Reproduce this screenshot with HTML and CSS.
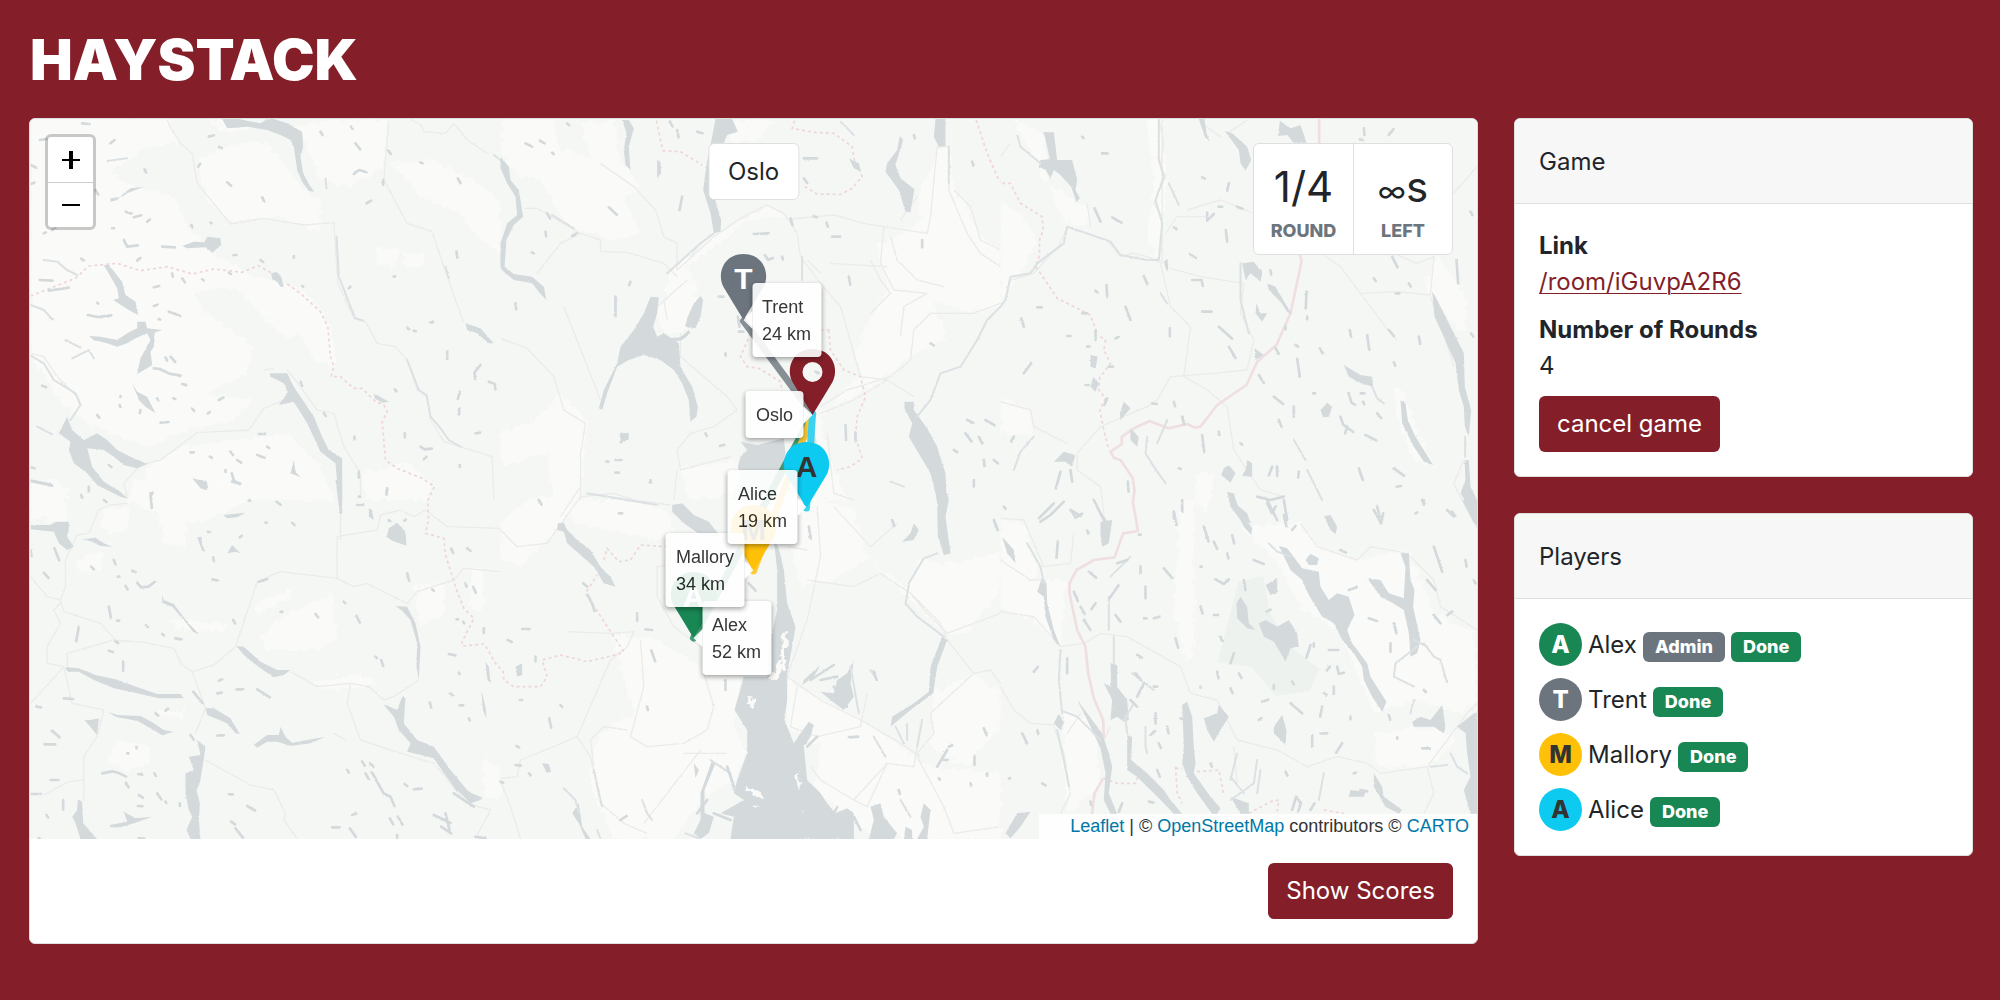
FILE: index.html
```html
<!DOCTYPE html>
<html lang="en">
<head>
<meta charset="utf-8">
<meta name="viewport" content="width=device-width, initial-scale=1">
<title>Haystack</title>
<link rel="stylesheet" href="styles.css">
</head>
<body>
<header class="site-header"><h1 class="brand">HAYSTACK</h1></header>
<main class="layout">
  <section class="card game-board">
    <div class="map">
      <div class="map-pane">
        <svg class="map-tiles" viewBox="30 119 1447 720" aria-hidden="true">
          <defs>
            <path id="pin" d="M0 0L-20-33C-27-46-20-66 0-66S27-46 20-33Z"/>
            <!-- rough natural edges for ground, shores and roads -->
            <filter id="rough-ground"><feTurbulence type="fractalNoise" baseFrequency=".05" numOctaves="3" seed="4"/><feDisplacementMap in="SourceGraphic" scale="30" xChannelSelector="R" yChannelSelector="G"/></filter>
            <filter id="rough-shore"><feTurbulence type="fractalNoise" baseFrequency=".15" numOctaves="2" seed="7"/><feDisplacementMap in="SourceGraphic" scale="6" xChannelSelector="R" yChannelSelector="G"/></filter>
          </defs>
          <!-- open ground -->
          <g class="open" transform="scale(.33333)">
            <path d="M90 357H500L540 430L420 450L330 520L400 560L520 590L560 680L640 760L760 830L860 850L940 900L990 980L1000 1100L960 1080L900 1000L860 1020L800 960L700 860L580 880L620 940L760 1040L740 1120L620 1180L760 1200L700 1260L560 1290L440 1340L300 1290L220 1240L160 1180L90 1060Z"/>
            <path d="M590 480L700 430L800 430L900 560L960 600L960 700L830 650L690 665L620 600Z"/>
            <path d="M620 360H700L760 380L680 400ZM880 380L1000 360H1160L1150 500L1040 560L960 540L920 440Z"/>
            <path d="M1170 490L1300 480L1420 540L1500 600V760L1440 720L1380 640L1260 590ZM900 1000L1000 1020L1010 1100L940 1080ZM1130 740L1200 750L1180 800L1130 790ZM1210 760H1270V800H1210Z"/>
            <path d="M540 1340L700 1320L860 1300L960 1400L1000 1500H400L440 1400ZM90 1460L200 1460L200 1500H90ZM1080 1420L1230 1390L1290 1450L1280 1500H1100Z"/>
          </g>
          <g class="open" transform="translate(0 480) scale(.33333)">
            <path d="M90 0H180L200 130L90 110ZM400 0H620L740 60L620 120L560 130L550 200L490 190L470 100L380 60ZM310 90L390 80L380 150L330 160L300 130Z"/>
            <path d="M780 470L860 400L1000 340V420L1010 480L940 510L800 510ZM770 370L880 325L860 360L760 410ZM1240 320L1330 310V400L1260 440ZM480 420H560L680 430L670 455L560 450ZM230 240L310 210L300 270L240 280ZM350 780L440 790L450 850L380 870L320 840Z"/>
            <path d="M1410 265H1450V390H1410ZM930 610L1080 580L1130 610L1080 625L960 625ZM1450 830L1500 870V950H1450ZM470 690L560 690L540 720L480 710Z"/>
          </g>
          <g class="open" transform="translate(500 100) scale(.33333)">
            <path d="M0 57H160L180 150L300 180L350 260L420 400L340 420L200 380L120 240L60 230L0 160ZM240 70L340 60L360 180L420 260L370 300L280 200Z"/>
            <path d="M700 60L830 60L770 120L690 130ZM650 400L800 320L860 350L740 360L640 440L560 500L590 570L530 620L490 570L520 500Z"/>
            <path d="M460 640L520 560L600 600L560 690L490 700ZM1250 290L1320 140L1350 150L1360 260L1450 420L1500 450V620L1420 640L1300 600L1340 720L1240 760L1140 840L1040 900L960 930L980 1060L1040 1200H940L930 980L1080 820L1060 760L1160 560L1130 440L1260 370Z"/>
            <path d="M180 880L260 960L240 1200H160L140 1060L0 1100V1000L100 960ZM540 1100L720 1080L720 1180L560 1200Z"/>
          </g>
          <g class="open" transform="translate(500 480) scale(.33333)">
            <path d="M200 60L380 60L500 90L520 160L460 180L320 150L220 130ZM900 40L1060 90L1100 240L1000 300L900 320L870 200ZM330 460L470 480L600 560L720 600L700 740L740 820L700 900L600 960L520 1077H340L260 900L300 760L400 700ZM860 600L1080 720L1200 800L1280 860L1500 880V1077L1130 1077L1000 980L940 920L960 800L860 740Z"/>
            <path d="M1100 240L1220 320L1260 240L1340 250L1500 220V330L1400 460L1340 460L1220 350ZM100 50L240 60L180 130L60 260L0 240V120ZM1300 640L1420 580L1500 640V740L1400 860L1290 800Z"/>
          </g>
          <g class="open" transform="translate(1000 100) scale(.33333)">
            <path d="M0 300L60 340L110 420L60 520L0 600ZM40 60L130 100L140 240L190 360L250 380L270 330L220 300L130 240ZM440 57H480L500 240L470 470L440 420L460 240ZM1180 860L1210 880L1260 1020L1300 1100L1240 1080L1190 960ZM1270 560L1310 460L1400 600L1390 700L1330 640ZM0 890L90 930L100 1010L0 1000ZM590 1120L640 1120L620 1240L580 1200Z"/>
          </g>
          <g class="open" transform="translate(1000 500) scale(.33333)">
            <path d="M0 60L80 80L110 240L200 240L180 440L100 360L0 330ZM720 80L900 70L950 140L1080 180L1220 150L1300 340L1420 400L1430 600L1380 640L1250 600L1120 640L1090 560L1020 400L900 320L840 200ZM190 640L280 660L300 860L200 940L190 800ZM1120 700L1300 680L1370 720L1280 800L1130 800ZM540 0H580V480H560L520 340Z"/>
          </g>
          <path class="park" d="M1228 620l10-38l25-6l6 36l20 34l30 23l-10 22l-34 5l-24-29l-34-5z"/>

          <!-- roads -->
          <g class="road" transform="scale(.33333)">
            <path d="M500 360L512 385L540 430L575 460L590 550L690 672L790 655L910 675L1000 668L1012 850L1060 955L1095 965L1130 1030L1185 1040L1220 1080L1250 1170L1280 1190L1290 1260L1330 1325L1475 1370L1480 1500M1165 360L1150 540L1220 670L1295 695L1340 830L1390 970M1230 358L1262 375L1270 395L1335 400L1360 370L1400 420L1460 460M850 1200L790 1225L745 1290L590 1298L480 1380L420 1395L370 1450L380 1490M790 1110L820 1105M860 1110L900 1160L950 1230L1000 1240L1030 1340L1080 1420V1490M90 1060L130 1070L170 1130L240 1200"/>
          </g>
          <g class="road" transform="translate(0 480) scale(.33333)">
            <path d="M380 70L330 75L295 90L265 160L230 165L195 240V320L180 360L190 395L300 430L350 485M90 290L140 350L180 360M180 370L160 390L180 430L140 500V550L190 560L90 670M190 560L215 670L310 690L290 770L250 830V960M200 560V520L340 480L430 487L520 505L545 555L575 575L640 555L705 500L770 305L840 275L1010 295L1010 170L1130 150L1140 105L1200 90L1240 110L1275 90L1340 140L1500 145M1020 100V180M575 575L615 685L585 760M615 840L750 915L820 930L855 1000L850 1020L890 1075M1010 295L1060 320L1100 310L1220 370L1250 335L1360 300L1390 265L1500 275M870 575L950 620L1050 610L1105 620L1150 660L1180 650L1255 600M1050 615L1040 670L1080 780L1170 810L1300 850L1400 970L1470 990L1430 1065M1000 760L1035 780M130 945L205 905L250 900"/>
          </g>
          <g class="road" transform="translate(500 100) scale(.33333)">
            <path d="M300 190L400 260L465 330L490 410L530 430V510L640 410L720 355L800 315L850 340L890 400L900 470L960 550L1020 620L1060 760L1080 830L1160 840L1240 890M70 325H110L240 400L300 420V455L380 457L490 490L530 530M110 520L180 430L240 400M870 357L1000 345L1090 370L1150 380L1140 490L1180 570L1280 580L1210 620L1200 710M1150 380L1280 400L1290 350L1310 140H1345V270L1400 400L1440 460L1500 500M1250 290L1200 360M1360 270L1410 320L1440 420L1500 450M1500 610L1420 640L1290 640L1240 690L1230 780L1170 830L1040 870L960 920M1160 840L1060 900L960 940M0 715L80 745L160 830L190 930L255 970L240 1060L240 1200M540 700V770L680 890L710 930L640 980L570 1000L530 1050L540 1110L690 1070M530 1110L520 1200M980 1000L1000 1180L1060 1200M490 600L500 660"/>
            <path d="M920 480L960 520M990 490L1160 500M1170 410L1190 480L1250 540L1330 560M1110 480L1140 540L1170 580L1110 640M570 470L600 430M300 900L190 620M560 540L470 620"/>
          </g>
          <g class="road" transform="translate(500 480) scale(.33333)">
            <path d="M0 150L50 200L140 190L240 50L340 40L400 60L510 75M240 20L180 110M640 190L600 240L470 260V350L520 440L600 500M200 455L330 460L400 455L380 500L330 540L230 770L160 800L60 840L50 890L0 895M230 770L270 830L300 970L370 1030L440 1060M420 480L430 620L390 770L440 800L550 790L620 750L640 680L610 580M550 820H680M600 810L500 940L430 1030M0 900L30 980L60 1077M860 590L960 660L1080 720L1200 790L1260 830M890 620L870 740L950 770L1080 740L1100 640M860 590L920 420L960 230L950 80M920 300L1060 320L1140 280L1230 340L1320 430L1340 480M1230 340L1280 400L1340 460L1500 400M1340 480L1420 580L1470 570L1500 610M1260 740L1240 860L1160 850L1060 960L1100 980L1160 850M1420 580L1290 700L1300 760L1250 820M1060 960L960 900L930 860M1250 830L1330 980L1360 1060L1500 1040M860 200L920 210M1000 80L1110 200L1190 130M280 860L270 780L310 740L380 750"/>
          </g>
          <g class="road" transform="translate(1000 100) scale(.33333)">
            <path d="M475 57L490 130L480 200L495 230L460 310L485 350V490L440 470L400 460L360 470L320 420L200 380L180 430L100 520L30 540L10 610M485 57V360M480 490L510 620L570 680L550 830L620 870L680 920L700 1050L780 1170L850 1190M610 75L660 110M680 100L740 60M620 350L530 350L495 400M560 330L660 300L760 340M510 505L600 530L730 550L720 640L760 720L740 810L640 820L510 830L470 900L440 920L300 980L230 1060V1110L300 1160L310 1240M0 905L90 930L100 980L200 1030M970 465L1020 500L1080 580L1170 700L1190 720M1080 580L1190 575L1290 585L1300 470L1250 490L1180 460M1290 590L1330 700L1360 800M1360 280L1430 200M1390 1080L1360 1150L1400 1230M270 380L260 310M0 170L30 130"/>
          </g>
          <g class="road" transform="translate(1000 500) scale(.33333)">
            <path d="M0 55L70 60L130 200L210 190L220 100M0 335L100 350L180 440L250 430L300 400L380 410L540 500L570 580L650 600L710 720L830 750L920 800L1010 770L1100 790L1140 820L1280 800L1400 640L1430 610M900 70L950 140L1070 180L1110 140L1220 160L1300 240L1320 320L1430 390M0 560L40 630L90 670L160 675L190 650M160 680L190 760L210 880L180 940M1280 800L1300 880L1270 940M0 180L90 240L120 240M700 740L710 850M310 720L330 680M240 640L200 700"/>
          </g>
          <g class="frontier" transform="translate(1000 100) scale(.33333)">
            <path d="M956 57V130M898 461L903 485L870 640L828 735L770 785L738 855L650 915L600 980L583 983L560 972L503 985L447 963L400 985L364 1010V1032L330 1055L340 1073L360 1080L397 1135L402 1170L397 1208L407 1260L412 1293L368 1300L342 1372L280 1380L228 1410L207 1450V1480L230 1590L255 1640L263 1720L280 1795L308 1860L310 1915M308 2035L282 2080L274 2145"/>
          </g>

          <!-- county lines -->
          <g class="county" transform="scale(.33333)">
            <path d="M90 888L225 835L265 798L350 790L420 812L500 800L575 822L640 807L725 817L773 797L815 820M860 852L900 880L960 935L982 980L990 1070L1000 1100L992 1130L1020 1130L1060 1165L1085 1165L1125 1205L1150 1215L1160 1235L1145 1265L1155 1380L1190 1405L1265 1435L1302 1460L1282 1500L1284 1560L1275 1600L1330 1615L1335 1665L1370 1775L1390 1825L1420 1855L1385 1925V1938L1452 1932L1485 1990L1508 2015L1510 2040L1540 2060L1620 2060L1640 2030L1625 1980L1680 1965L1760 1985L1855 1962L1870 1955L1755 1780L1790 1725M1810 1680L1820 1645L1855 1685L1890 1680L1920 1635L2000 1640"/>
          </g>
          <g class="county" transform="translate(500 100) scale(.33333)">
            <path d="M468 62L482 130L488 152L540 155L605 195M882 62L875 85L940 97L1000 100L1055 140L1060 175L1085 230L1055 265L1020 283L950 282L905 255M1427 60L1460 160L1490 230L1500 245M750 700L720 770L740 800L775 805L840 845L845 875M985 690L990 750L1030 810L1080 830L1095 890L1070 950L1065 1010L1085 1075L1050 1100L1010 1110M960 690H990"/>
          </g>
          <g class="county" transform="translate(1000 100) scale(.33333)">
            <path d="M5 250H30L60 310L125 350L128 390L117 420V465L105 500L120 520L170 595L270 645L290 700M300 710L315 720L310 750L330 790L297 835L295 870L315 895L298 930L310 990L325 1050M310 2035L350 2050L405 2050L412 2030M525 2000L530 2080L545 2110M525 2005H545M590 2015L655 2010L670 2085M745 2140L810 2105L835 2100L830 2135M970 2130L1030 2140"/>
          </g>

          <!-- lakes, fjord and rivers -->
          <g class="water" transform="scale(.33333)">
            <path d="M665 357H715L780 370L800 357H820L860 370L905 395L908 440L900 470L908 520L930 560L942 575L925 573L905 545L890 510L880 440L870 420L840 405L800 390L740 380L680 385Z"/>
            <path d="M545 738L580 725L612 727L620 710L660 715L662 735L635 758L615 742L560 745ZM310 795L325 795L365 845L375 885L405 905L413 945L385 930L338 900L355 895L350 865ZM812 820L830 815L842 830L850 860L840 860L830 845L815 838Z"/>
            <path d="M265 1008L300 1010L350 1020L380 1000L410 985V965L435 965L440 985L485 990L462 998L460 1040L450 1055L455 1095L440 1105L410 1122L420 1075L450 1020L440 1000L405 1015L380 1030L350 1040L320 1030L280 1020Z"/>
            <path d="M808 1120L860 1120L880 1160L940 1250L965 1310L985 1350L1025 1375V1500L1015 1500L1005 1390L960 1355L920 1270L880 1205L835 1215L862 1175L850 1150L810 1130Z"/>
            <path d="M175 1300L200 1250L215 1290L250 1320L290 1300L320 1320L350 1350L390 1370L440 1392L410 1405L370 1395L340 1370L310 1350L260 1345L275 1400L310 1445L350 1470L385 1497L360 1490L290 1455L260 1420L220 1390L205 1350L210 1325Z"/>
            <path d="M395 1150L410 1175L440 1190L465 1240L435 1220L415 1200ZM1120 1180L1165 1205L1145 1208L1122 1195ZM1395 970L1440 985L1480 1030L1465 1030L1430 1000L1400 990ZM575 1435L620 1445V1470L600 1465ZM880 1380L885 1415L900 1432L870 1420ZM330 595L365 590L380 580L430 560L390 565L370 580L350 600L330 605Z"/>
          </g>
          <g class="river" transform="scale(.33333)">
            <path d="M90 1067L130 1090L160 1140L225 1180L240 1215L210 1260M1008 710L1015 830L1050 920L1065 955L1090 962M1335 800L1345 835M1480 465L1500 480M110 1280L155 1303M90 915L130 930L157 960M130 780L170 785L200 810L230 825M195 1020L240 1043M215 1075L265 1050L280 1075M320 483L380 475M975 535L978 565M1220 1080L1255 1170L1278 1185L1290 1250L1320 1285L1345 1320L1380 1340"/>
          </g>
          <g class="pond" transform="scale(.33333)">
            <path d="M245 370l22 2M118 420l20 -3M330 430l12 -10M432 508l5 10M593 500l6 -8M625 410l15 -4M656 441l8 3M960 395l6 10M1052 380l4 6M1065 430l14 18M1163 452l8 10M1260 487l6 3M1060 522l16 -12l20 6M1148 540v14M1372 535l8 14M1098 610l14 -8M680 547l12 10M785 592l6 12M90 495l18 8M90 552l12 -4M376 635l18 6M400 652l22 -6M440 665l8 -6M573 675l2 6M630 668l3 2M370 720l10 20l32 -4M485 740l38 2M700 765h8M780 780l8 6M410 782l10 -8M242 776l8 5M880 768v5M460 862l16 -4M545 835l8 12M515 820l2 10M605 838l4 3M685 818l6 4M1180 830l4 -1M1368 755l2 18M145 872l35 -5l25 -4M118 840l38 2M290 908l3 3M262 945l30 6l40 -5M460 918l12 -4M505 935l14 5l20 8M475 957l4 2M1220 982l6 6M1240 992l6 2M1290 967h8M495 1072l6 10M510 1070l14 16M460 1105l18 2l28 14l34 6M470 1195l3 5M518 1195l6 2M655 1200l14 -8M575 1225l6 8M622 1240l6 -4M480 1268l24 -2M360 1188v3M358 1215l2 6M418 1240l2 -10M290 1245l6 8M545 1152l12 4M125 1157l12 4M900 1145l5 12M970 1240l6 8M1183 1168l5 6M1213 1300v12M1260 1340l12 8l22 -2M1270 1378l8 -8M1062 1310v8M775 1302l18 0M800 1340l6 4M770 1365l22 8M690 1355l8 10M710 1380l12 8M675 1410v6M694 1420l6 22l18 10M628 1370l6 3M570 1357h10M1075 1415v18M1160 1465l-2 15M1340 1055v22M1440 1095l-18 22l2 20M1465 1145l18 8l2 15M1378 1175l-6 22M1376 1225v18M1425 1300l14 -2M1378 1395v6M325 1395l8 6M450 1490l6 -12M285 570l8 14M155 690l10 -5M130 700l6 -3M335 685h6M1045 865l5 -5M905 858l3 2M90 1402l12 3M90 1442l60 12"/>
          </g>
          <g class="water" transform="translate(0 480) scale(.33333)">
            <path d="M90 135L150 135L165 125L205 125V150L200 170L220 200L200 210L175 190L160 155L90 148ZM280 0L310 15L350 28L380 55L355 40L300 20ZM580 0H605L622 20L612 30ZM668 105L735 98L710 112L680 115ZM590 172L603 170L605 195L615 215L605 212ZM680 220L695 195L720 220L705 215ZM245 178L285 173L310 190L335 200L300 198L275 185Z"/>
            <path d="M485 345L490 360L520 372L560 425L595 462L580 458L550 420L515 380L485 368ZM708 498L730 500L780 545L830 570L870 570L850 585L820 592L795 575L760 550L730 525ZM195 562L235 565L285 585L345 598L420 625L470 642L540 642L550 655L475 655L410 640L340 625L280 600L235 575L200 575Z"/>
            <path d="M615 685L640 685L690 715L718 762L705 760L680 730L620 705ZM320 695L350 705L420 708L460 730L490 750L520 755L485 766L450 745L410 722L350 712ZM760 795L800 765L835 765L840 740L855 770L875 788L975 770L930 790L870 798L830 785L800 785L770 803ZM590 780L615 800L608 850L598 910L588 930L598 970L595 1020L600 1077H570L558 1050L575 1010L565 990L555 940V880L580 870L565 830L600 825ZM232 958L245 965L248 1030L290 1077H240L225 1030L215 1010L230 990ZM328 1035L380 1025L370 995L405 1015L455 1010L400 1030L360 1042L330 1042Z"/>
            <path d="M1165 145L1190 128L1215 155L1218 197L1175 182L1158 170ZM1185 378L1220 380L1245 430L1260 500L1255 600L1248 560L1250 490L1230 420L1205 392ZM1148 672L1190 690L1205 650L1215 655L1210 730L1250 780L1300 800L1350 870L1400 930L1440 960L1410 970L1360 920L1330 880L1300 835L1220 815L1230 790L1195 750L1180 710ZM252 720L270 720L295 715L290 765ZM1005 0H1025V100H1018ZM1105 85L1115 90L1120 120L1105 110ZM1455 545L1465 560L1470 610L1460 600ZM1443 630L1455 680L1458 715L1447 690Z"/>
          </g>
          <g class="pond" transform="translate(0 480) scale(.33333)">
            <path d="M90 3l65 14M450 40l4 44M242 45l3 8M265 20v14M310 60l8 6M745 62h4M828 65l12 9M875 128l8 8M795 128h4M622 155l5 2M718 172l6 -5M638 232l2 10M340 240l5 14M395 272l10 4M352 290h5M130 278l14 16M272 260l8 8M375 318l6 10M410 308l12 14l22 -2l18 -14M636 298l14 3M775 305l25 -8M90 210l3 18M162 205l14 36M325 380l6 32M350 422h6M235 440l-8 44M325 512l12 4M368 545v28M345 485l8 4M436 436l6 5M485 462l5 4M525 475l18 3M698 420l6 10M840 396h6M945 402l8 10M1068 408l10 20M1030 366l4 3M1295 328l5 4M1352 205l6 14M1400 205l10 8M1220 280l6 22M1395 310l3 10M1418 320l8 18M1368 418h5M1388 425l3 5M1450 445v14M1345 522l20 4M1375 578l2 4M1125 530l4 4M1142 540l6 18M650 640l14 -2M655 602l10 -4M708 628h20M770 628l38 24M578 635l28 34M190 655l28 2M108 680l14 2M155 752l22 20M132 793h32M408 800v5M380 820h4M305 880l30 -6l22 6l20 10M376 908l8 14M413 882l12 2M462 880l3 7M470 940l12 18M495 965l3 4M415 945l12 8M412 978h14M538 970v8M150 900h24M90 942h32M188 960v30M138 1005l5 8M685 943h12M740 978l24 14M692 1025l12 8M705 1045l22 28M1085 845l8 12M1108 850l12 10M1095 880l10 18M1115 878l32 58M1150 940l20 10l12 28M1168 1015l10 18M1192 1010l14 24M995 1042h22M1048 1045l18 26M1055 1005l12 -4M1212 912l8 6M1240 928l24 -2M1190 1065v10M1350 640l6 6M1288 668l4 14M1378 676h10M1405 715l3 6M1300 1005l50 24M1335 1000l12 50M1322 1040l30 20M1425 1070l30 5M1340 880l30 50M1390 935l50 20M1360 940l60 40M1070 75h18M1075 50h4M1160 28l-2 16M695 5l24 6M1165 120l4 3M1212 122l4 -3M1040 870l5 8M465 700l8 6M495 692l8 -6M650 766h20M570 765l10 14M115 1074l4 3M415 1074l16 2"/>
          </g>
          <g class="water" transform="translate(500 100) scale(.33333)">
            <path d="M0 170L25 200L30 240L55 270L68 350L40 375L18 420L12 500L40 522L95 530L130 560L138 600L118 580L95 550L40 540L10 515L0 505V430L20 370L50 345L45 290L20 250L0 205ZM365 60H385L400 85L385 140L390 210L375 195L370 150L378 100ZM645 57H695L712 95L680 105L665 140L640 230L635 270L662 360L660 395L640 400L630 340L608 270L620 180L635 110Z"/>
            <path d="M1305 57H1335V138L1315 140L1300 110ZM1198 108L1208 120L1185 195L1200 235L1242 268L1230 335L1215 335L1195 270L1155 215L1160 190L1190 150ZM450 590L475 592L470 640L458 680L470 710L490 700L535 730L540 800L575 860L592 920L588 950L570 965L565 900L545 850L520 810L480 780L430 765L385 780L350 800L320 880L305 930L295 925L310 870L350 790L360 740L400 690L430 640Z"/>
            <path d="M600 588L608 600L600 650L585 685L555 680L560 655L580 610ZM500 715L540 712L565 690L570 700L545 720L520 725ZM712 1100L720 1070L740 1050L720 1025L770 1035L850 1015L855 1060L845 1110L820 1200H690L720 1130ZM1212 905L1240 905V930L1280 985L1310 1040L1335 1120L1338 1200H1310L1290 1120L1225 1010L1235 970L1212 925ZM470 180L480 185L482 220L470 235ZM1045 175L1075 190L1082 215L1060 205ZM357 1000L385 998L385 1018L362 1030Z"/>
          </g>
          <g class="river" transform="translate(500 100) scale(.33333)">
            <path d="M1500 620L1460 660L1430 720L1380 800L1320 820L1290 900L1250 950M1020 65L1060 105M940 1000L955 1080M905 470V540M940 1020L915 1110M155 345L220 385M1345 140V250M640 400L600 430L500 520"/>
          </g>
          <g class="pond" transform="translate(500 100) scale(.33333)">
            <path d="M75 130l20 10M118 122l14 8M200 70l6 6M155 158l4 4M590 95l16 5M530 90l4 22M508 65l8 14M545 290l-8 40M325 322l24 22M140 340l8 14M215 408l14 -8M135 395l2 14M94 457l6 3M45 610l2 18M345 590v58M390 545l-4 10M910 175h40M910 235l10 14M1265 420v22M870 355l6 20M978 368l4 12M940 348l8 4M1045 530l4 24M793 465l10 15l14 -6M845 470l2 8M760 402l44 -2M995 410h24M655 590h14M712 650l5 30M715 695h14M375 1015l-14 12M615 1000l4 8M658 1038l14 -4M345 1080h18M345 1118h10M318 1085h6M1035 975l2 45M1065 1000v24M1395 1000l18 24M1400 960l18 8M1450 1080l2 18M1455 960l28 16M1435 1010l10 20M1480 1080l12 10M1415 185l4 12M1360 1050l10 6M675 760v8M450 1140v8M1290 730l10 6M1240 105l3 10M945 815l10 4"/>
          </g>
          <g class="water" transform="translate(500 480) scale(.33333)">
            <path d="M515 75L545 70L580 105L625 125L660 170L600 165L550 130L515 95ZM172 130L190 128L200 150L230 180L270 210L300 260L330 290L345 320L310 310L280 260L240 225L200 190L190 155L170 150ZM820 180L835 205L850 270L860 370L885 440L875 500L860 580L860 660L852 720L880 790L900 760L925 725L940 735L930 770L910 800L920 900L960 940L980 970L1005 1000L1040 985L1060 1000V1077H690L700 1010L660 1000L730 960L700 940L710 900L740 820V750L702 690L730 590L800 590L805 500L830 390L830 270Z"/>
            <path d="M1300 0H1335L1335 30L1345 60L1335 110L1350 220L1330 225L1312 170L1310 70ZM530 388H560L570 420L585 470L550 420ZM1325 470L1340 480L1310 560L1298 640L1230 690L1170 740L1175 710L1240 670L1285 635L1290 560ZM635 840L645 850L612 930V1000L640 1010L625 1060L600 1077L580 1060L600 1020V940ZM580 850L595 870L585 895ZM910 600L960 555L940 590L905 615ZM960 635L1000 640L1010 600L1040 580L1060 540L1050 610L1060 650L1030 690L990 660ZM1110 980L1140 970L1150 1010L1190 1060L1180 1077H1105L1120 1020ZM1270 970L1290 990L1280 1077H1250L1270 1040L1260 1010ZM1215 1040L1235 1050V1077H1210ZM215 1000L235 970L245 1040L270 1077H255L235 1030ZM125 850L145 852L152 875L138 878ZM45 560L65 550L65 585L50 590ZM1240 130L1255 150L1240 180L1205 185L1230 160Z"/>
          </g>
          <g class="river" transform="translate(500 480) scale(.33333)">
            <path d="M260 40L380 60L470 75M190 925L225 960L235 1000M630 840L690 880L700 930M1050 560L1075 700M1110 570L1130 600M1120 770L1155 830M1185 740L1210 790M1220 730V780M1265 720L1250 800M1225 315L1215 370L1250 410L1330 470M1310 220L1270 235L1225 310M280 870L295 940L305 980M425 960L440 1000L455 1020M1170 5L1210 20M290 1050L300 1077M600 1077L555 1060M1200 960L1230 1010"/>
          </g>
          <g class="pond" transform="translate(500 480) scale(.33333)">
            <path d="M115 60l8 14M355 100h10M248 310l12 10M262 345l14 28l6 20M410 400v22M435 448l20 2M452 510l12 34M65 447h22M22 480l12 6M58 660h8M180 675l5 6M146 715l6 28M48 798l8 4M45 855l16 2M85 880l6 6M0 905l8 3M440 680l2 10M675 600v30M745 310l20 22M925 140l6 36M1175 120l6 18M1120 575l8 24M1045 772l28 -2M1450 745l8 20M1422 830v25M1340 810l-30 50M1345 800l10 -4M1460 880v8M1410 910l2 6M1315 895l3 4M1480 120l12 30M1420 0v20M1330 840h10M1195 930l3 12M360 1020l18 -12M105 530v14M960 600l50 -10M1000 620l40 60M930 600l70 -45M880 1000l5 10M680 860l20 60M1060 1010l20 40M1000 1000l10 -20M950 770l-30 30M590 1000l30 -40M640 1000l50 20"/>
          </g>
          <g class="open" transform="translate(500 480) scale(.33333)">
            <path d="M742 655L760 655L762 685L748 680ZM845 455L860 460L862 500L850 510L852 565L820 600L805 600L840 540ZM885 880L895 870L898 925L885 920ZM735 920L780 935L795 960L770 945L735 935ZM755 975L775 980L765 990ZM900 990L908 992L905 1000Z"/>
          </g>
          <g class="water" transform="translate(1000 100) scale(.33333)">
            <path d="M130 97L160 97L170 180L215 180L230 240L225 270L238 295L228 307L212 260L180 225L160 210L150 235L135 210L115 200L120 180L148 178ZM595 57H612L618 100L628 125L612 108ZM672 92L695 100L740 140L752 180L735 212L720 190L715 150ZM838 62L870 85L900 75L918 128H880L860 105L833 108ZM725 490L760 485L785 520L780 545L750 520L735 540ZM800 550L825 560L875 645L860 635L840 605L805 570ZM1295 575L1305 590L1345 670L1390 760L1393 860L1412 930L1405 1010L1393 980L1390 920L1375 870L1365 790L1325 700L1302 650Z"/>
            <path d="M1392 1080H1405L1410 1160L1430 1200V1260L1405 1220L1380 1180L1395 1140ZM1030 795L1080 825L1115 830L1118 860L1080 850L1045 830ZM1200 900L1215 910L1222 960L1245 1010L1298 1095L1270 1085L1240 1040L1205 970ZM670 1105L685 1095L705 1120L690 1148L662 1125ZM740 1080L755 1090V1130L725 1128L735 1110ZM960 930L980 908L995 920L985 950L968 952ZM680 1175L700 1180L710 1215L740 1240L750 1270L720 1260L690 1220ZM370 905L390 925L360 960L358 940ZM390 985L415 1010L410 1040L390 1020ZM160 1085L190 1055L225 1065L215 1100L195 1085ZM762 745L790 765L765 780ZM270 765L292 770L285 805L270 800ZM278 830L295 850L285 875L270 860ZM768 610L780 640L800 640L785 665L765 640Z"/>
          </g>
          <g class="river" transform="translate(1000 100) scale(.33333)">
            <path d="M475 60L475 180L490 230L465 300L485 370L475 480L440 480L360 465L330 425L200 380L190 430L110 490L90 520L30 530L15 600L0 620M505 250L535 315M1115 860L1130 895L1150 910M440 1010L435 1060L460 1100L495 1150M880 1020L915 1080M480 580L500 610M50 105L60 140L120 190M720 490V600L745 700M500 960L470 1030M920 1110L965 1200M1394 1010V1070M100 1010L60 1055L40 1110M500 480V510"/>
          </g>
          <g class="pond" transform="translate(1000 100) scale(.33333)">
            <path d="M305 160h18M245 110l4 4M282 325l18 40M335 352l28 16M605 232l8 4M685 250l-5 22M655 320h10M710 320l16 6M620 338v24l20 -20M520 382l8 5M676 390l4 35M568 462l18 12M575 540h28l4 18M430 528l10 24M495 485l4 18M285 572l6 5M318 555l2 34M375 620l15 40M110 622h14M62 655l8 25M245 640h14M200 708h10M345 715l8 -4M508 685v24M605 635h28M780 515v-3M810 510l2 14M655 680l40 36M685 740l20 34M775 825l15 24M825 745l10 16M855 680v8M885 735l8 5M890 775l8 55M958 745l8 15M918 575l-2 50M920 650v8M1090 85l2 20M1078 118l10 2M1165 105l14 -18M1120 535l6 8M1175 470l16 32M1225 550l6 10M1185 580h12M1180 787l4 10M1255 710l4 22M1100 705l6 44M1048 690l4 20M1368 480l5 70M1412 700l6 10M1410 335l6 10M1165 690l15 18M820 890l28 22M938 880h6M835 960l8 20M880 920v30M1045 880l8 28l10 6M1088 905l3 8M1130 940l12 14M1020 950l8 24l30 22M1040 980l-6 20M1095 1005l32 16M1080 880h12M605 1005l6 50M545 950l6 24M655 995l2 10M720 1030l5 4M815 1100l-10 26M830 1100v28M895 1115l-2 18M520 905l4 14M455 910l14 2M535 1105l6 2M545 1200v35M70 820l22 -30M40 1010l-8 14M382 1145l2 30M1075 1105l12 35M1180 1105l30 22M1190 1160l12 -2M1130 1220l8 30M1340 1230l20 20M1265 1200l5 14M770 1190l40 10l40 -10M800 1200l30 60M850 1200l10 60M320 895l-8 20M255 855h10M260 740h6M325 800h12M180 1115l-14 50M210 1110l5 35M10 1220l5 6M160 1210l-45 45M210 1230l30 18M300 1240l10 20M520 1240v15M285 690v30"/>
          </g>
          <g class="water" transform="translate(1000 500) scale(.33333)">
            <path d="M685 0H705L720 35L755 85L752 105L730 80L710 40ZM970 48L990 45L1010 80L1005 102L990 90ZM1385 0H1410L1430 50V85L1410 50ZM300 65L335 60L325 130L305 140L300 110ZM835 138L860 145L905 205L955 215L960 260L985 300L1010 280L1045 290L1062 345L1040 390L1055 430L1100 490L1110 530L1158 605L1145 635L1115 590L1090 540L1085 500L1060 460L1025 420L1000 370L965 350L925 285L905 240L870 210ZM915 180L930 162L955 175L950 195L925 195ZM1100 235L1140 240L1165 280L1210 295L1215 200L1200 160L1225 160L1230 240L1242 270L1238 320L1260 420L1250 460L1230 470L1225 400L1210 330L1170 305L1140 290Z"/>
            <path d="M720 290L740 320L745 370L765 390L740 385L710 355L708 310ZM775 370L795 360L830 380L865 360L890 400L895 440L870 445L855 485L835 450L820 425L790 410ZM795 255L830 235V280L810 285ZM5 110L40 150L45 190L20 160ZM110 275L125 230L138 250L140 310L160 390L180 440L160 420L135 350L130 290ZM330 490L350 495L350 560L380 600L385 660L370 665L350 650L330 660L335 600L310 550L332 560ZM610 655L650 640L655 615L685 650L660 690L640 725L620 690ZM820 680L845 645L858 690L855 735L820 700ZM545 615L560 605L575 650L580 740L585 790L580 820L630 890L660 925L650 941H635L590 880L560 830L545 790L550 740ZM380 705L395 710L392 780L440 820L490 870L510 900L545 941H520L490 910L450 870L410 830L380 810ZM230 600L260 640L305 700L325 760L335 800L325 880L350 941H330L310 900L315 820L300 745L270 680ZM1430 640V941H1410L1390 870L1410 830L1400 760L1395 700L1370 680L1420 640ZM1235 665L1260 650L1290 660L1325 615L1335 680L1330 700L1300 680L1240 680ZM1050 870L1095 875L1090 890L1045 890ZM1120 820L1145 860L1150 890L1205 930L1195 941L1155 920L1120 860ZM160 670L175 640L190 670L180 690ZM15 1000L50 940L90 935L60 980L30 1015ZM690 890L745 910V941H720Z"/>
          </g>
          <g class="river" transform="translate(1000 500) scale(.33333)">
            <path d="M80 130L120 200L130 250M180 450L175 540L185 640M170 690L190 780L205 860M340 410L340 490M395 520L460 570M190 635L230 650L300 720M400 610L370 660M375 660L380 700M1250 440L1185 490L1180 530L1240 560M1270 430L1300 470L1320 480L1340 550M1290 800L1340 795M1350 760L1370 800L1400 820M325 290V390M390 170L330 230M690 830L730 880M770 780L760 850L690 900M805 130L830 155L870 170M435 680V740L440 760M780 810L770 880M710 760L690 840M970 820L955 900M1280 440L1240 420M1240 600L1230 640"/>
          </g>
          <g class="pond" transform="translate(1000 500) scale(.33333)">
            <path d="M120 65l30 -20l40 -40M215 35l10 18l20 -12M260 92l4 8M172 125l-4 48M280 0l20 40l20 30M520 35l8 40M610 80l14 44M640 125l10 22M695 105l6 25M680 160l4 15M415 104h6M380 180l-30 10M420 200v18M435 260v35M490 205l26 30M265 215l22 18M355 255l-28 40M220 275l12 28M240 320l12 22M285 310l-12 18M250 360l20 30M345 345l15 20M430 355h8M460 355l18 -5M600 200h4M645 238l25 14l15 -14M730 240l5 30M760 180l30 12M600 320l6 20M640 345h14M850 45l8 35M875 90l10 -12M800 10l15 30l10 -20M1120 30l22 40l6 -30M1355 35l8 12M1300 140l25 75M1395 180l3 20M1280 240l25 30M1420 240l5 10M1020 150l16 8M1045 270l24 -8M1355 335l-14 10M1300 345l20 25M1105 355l24 8M1180 370l8 30M1170 430v25M660 410l4 12M525 415l8 28M800 335l10 -6M930 435l-12 38M985 450h28M940 440v-10M700 460l-10 30M650 515l4 20M715 520l8 14M1010 500l5 22l15 -4M980 510l8 -10M690 565l6 14M820 555v12M875 545l5 8M970 580l8 4M1000 560v22M600 560v3M785 605l18 -6M870 610l35 30M965 620l-6 30M1050 650v8M775 660l8 -6M1165 645l4 14M935 705v35M960 700h20M1025 730l-18 28M500 680l4 20M475 730l6 14M465 640v30M450 705l14 -12M405 520l16 20M430 550l-20 40M390 600l20 20M470 810l8 20M855 815l6 12M875 930l12 -40l14 20l-8 24M930 930l12 -20M1060 820l6 -2M1265 745h22M1190 712v4M1080 870l20 4M270 905l2 10M365 910l-10 25M445 905l14 3M125 850l10 6M25 835h4M65 700l15 30M110 690l4 12M100 515l12 -14M200 475v45M410 465l14 8M540 655l16 6M1270 570l6 6M1420 770l6 20M470 560h-10M630 790l4 10M1245 40l5 -3M1270 0v10"/>
          </g>

          <!-- guess lines, drawn under the pins -->
          <g class="routes">
            <path class="line-gray" d="M812 414L743 321"/>
            <path class="line-green" d="M812 414L693 638"/>
            <path class="line-yellow" d="M812 414L753 571"/>
            <path class="line-cyan" d="M812 414L806 508"/>
          </g>
          <g transform="translate(743 320)"><use href="#pin" class="fill-gray"/><text class="pin-letter" y="-31">T</text></g>
          <g transform="translate(812 415)"><path class="fill-brand" fill-rule="evenodd" d="M0 0L-20-33C-27-46-20-66 0-66S27-46 20-33ZM-10-43a10 10 0 1 0 20 0a10 10 0 1 0-20 0Z"/></g>
          <g transform="translate(806 508)"><use href="#pin" class="fill-cyan"/><text class="pin-letter dark" y="-31">A</text></g>
          <g transform="translate(753 571)"><use href="#pin" class="fill-yellow"/><text class="pin-letter dark" y="-31">M</text></g>
          <g transform="translate(693 638)"><use href="#pin" class="fill-green"/><text class="pin-letter" y="-31">A</text></g>
        </svg>
        <div class="tip tip-right tip-alex">Alex<br>52 km</div>
        <div class="tip tip-left tip-mallory">Mallory<br>34 km</div>
        <div class="tip tip-left tip-alice">Alice<br>19 km</div>
        <div class="tip tip-right tip-trent">Trent<br>24 km</div>
        <div class="tip tip-left tip-oslo">Oslo</div>
      </div>
      <div class="zoom">
        <button type="button" aria-label="Zoom in"><svg width="18" height="18" viewBox="0 0 18 18"><path d="M0 8h18v2H0zM7 0h4v18H7z"/></svg></button>
        <button type="button" aria-label="Zoom out"><svg width="18" height="18" viewBox="0 0 18 18"><path d="M0 8h18v2H0z"/></svg></button>
      </div>
      <div class="target">Oslo</div>
      <dl class="stats">
        <div class="stat"><dd>1/4</dd><dt>ROUND</dt></div>
        <div class="stat"><dd><span class="infinity">∞</span>s</dd><dt>LEFT</dt></div>
      </dl>
      <div class="attribution"><a href="#leaflet">Leaflet</a> | © <a href="#osm">OpenStreetMap</a> contributors © <a href="#carto">CARTO</a></div>
    </div>
    <div class="board-actions"><button type="button" class="btn">Show Scores</button></div>
  </section>
  <aside class="sidebar">
    <section class="card">
      <h2 class="card-header">Game</h2>
      <div class="card-body">
        <dl class="facts">
          <dt>Link</dt><dd><a href="#room">/room/iGuvpA2R6</a></dd>
          <dt>Number of Rounds</dt><dd>4</dd>
        </dl>
        <button type="button" class="btn">cancel game</button>
      </div>
    </section>
    <section class="card">
      <h2 class="card-header">Players</h2>
      <ul class="card-body players">
        <li><span class="avatar green">A</span><span>Alex</span><span class="badge gray">Admin</span><span class="badge green">Done</span></li>
        <li><span class="avatar gray">T</span><span>Trent</span><span class="badge green">Done</span></li>
        <li><span class="avatar yellow">M</span><span>Mallory</span><span class="badge green">Done</span></li>
        <li><span class="avatar cyan">A</span><span>Alice</span><span class="badge green">Done</span></li>
      </ul>
    </section>
  </aside>
</main>
</body>
</html>
```
FILE: styles.css
```css
:root {
  --brand: #841f2a;
  --ink: #212529;
  --gray: #6c757d;
  --green: #198754;
  --yellow: #ffc107;
  --cyan: #0dcaf0;
  --line: #dfdfdf;
}
* { box-sizing: border-box; }
body {
  margin: 0;
  padding: 0 27px 36px 29px;
  background: var(--brand);
  color: var(--ink);
  font: 24px/36px Inter, "Liberation Sans", sans-serif;
}
h1, h2, dl, dd, ul { margin: 0; padding: 0; }
button { font: inherit; cursor: pointer; }

.site-header { padding: 24px 1px 22px; }
.brand { color: #fff; font-size: 57px; font-weight: 900; line-height: 72px; }

.layout { display: grid; grid-template-columns: repeat(12, minmax(0, 1fr)); gap: 36px; align-items: start; }
.game-board { grid-column: span 9; }
.sidebar { grid-column: span 3; display: grid; gap: 36px; }

.card { background: #fff; border: 1px solid var(--line); border-radius: 6px; overflow: hidden; }
.card-header { padding: 25px 24px 23px; background: #f7f7f7; border-bottom: 1px solid var(--line); font-size: 24px; font-weight: 400; line-height: 36px; }
.card-body { padding: 24px; }
.facts dt { font-weight: 700; }
.facts dd { margin-bottom: 12px; }
.facts a { color: var(--brand); text-underline-offset: 3px; text-decoration-thickness: 1px; }
.btn { display: block; height: 56px; padding: 0 18px; border: 0; border-radius: 6px; background: var(--brand); color: #fff; }
.board-actions { display: flex; justify-content: flex-end; padding: 24px; }

.players { display: grid; gap: 12px; list-style: none; }
.players li { display: flex; align-items: center; gap: 6px; height: 43px; }
.avatar { width: 43px; height: 43px; border-radius: 50%; color: #fff; font-weight: 800; line-height: 43px; text-align: center; }
.badge { margin-top: 4px; padding: 0 12px; border-radius: 6px; color: #fff; font-size: 18px; font-weight: 800; line-height: 30px; }
.gray { background: var(--gray); }
.green { background: var(--green); }
.yellow { background: var(--yellow); color: #333; }
.cyan { background: var(--cyan); color: #333; }

.map { position: relative; height: 720px; overflow: hidden; background: #f5f7f5; font-family: "Liberation Sans", Arial, sans-serif; }
.map-pane { position: absolute; top: 0; left: 50%; width: 1447px; height: 720px; transform: translateX(-50%); }
.map-tiles { display: block; width: 100%; height: 100%; }
.open { fill: #fafaf8; filter: url(#rough-ground); }
.park { fill: #edf2ef; }
.water { fill: #d4dadc; filter: url(#rough-shore); }
.river, .pond { fill: none; stroke: #d4dadc; stroke-linecap: round; stroke-linejoin: round; filter: url(#rough-shore); }
.river { stroke-width: 6; stroke: #dce1e3; }
.pond { stroke-width: 8; }
.road { fill: none; stroke: #ebebea; stroke-width: 4; stroke-linejoin: round; filter: url(#rough-shore); }
.frontier { fill: none; stroke: #f0dfe0; stroke-width: 8; stroke-linejoin: round; }
.county { fill: none; stroke: #eed5da; stroke-width: 5; stroke-dasharray: 9 9; }

.routes { fill: none; stroke-width: 7; stroke-linecap: round; opacity: .8; }
.line-gray { stroke: var(--gray); }
.line-green { stroke: var(--green); }
.line-yellow { stroke: var(--yellow); }
.line-cyan { stroke: var(--cyan); }
.fill-gray { fill: var(--gray); }
.fill-green { fill: var(--green); }
.fill-yellow { fill: var(--yellow); }
.fill-cyan { fill: var(--cyan); }
.fill-brand { fill: var(--brand); }
.pin-letter { fill: #fff; font-size: 30px; font-weight: 700; text-anchor: middle; }
.pin-letter.dark { fill: #333; }

.tip { position: absolute; padding: 11px 10px 9px; border-radius: 4px; background: #fff; box-shadow: 0 2px 5px rgba(0, 0, 0, .4); color: #222; font-size: 18px; line-height: 27px; white-space: nowrap; opacity: .9; }
.tip::before { content: ""; position: absolute; top: 50%; border: 9px solid transparent; transform: translateY(-50%); }
.tip-right::before { right: 100%; border-left-width: 0; border-right-color: #fff; }
.tip-left::before { left: 100%; border-right-width: 0; border-left-color: #fff; }
.tip-trent { left: 722px; top: 164px; }
.tip-oslo { right: 674px; top: 272px; }
.tip-alice { right: 680px; top: 351px; }
.tip-mallory { right: 733px; top: 414px; }
.tip-alex { left: 672px; top: 482px; }

.zoom { position: absolute; top: 15px; left: 15px; border: 3px solid rgba(0, 0, 0, .2); border-radius: 6px; background: #fff; background-clip: padding-box; }
.zoom button { display: grid; place-items: center; width: 45px; height: 45px; padding: 0; border: 0; background: none; }
.zoom button + button { border-top: 1px solid #ccc; }

.target, .stats { position: absolute; top: 24px; border: 1px solid var(--line); border-radius: 6px; background: #fff; font-family: Inter, "Liberation Sans", sans-serif; }
.target { left: 50%; padding: 10px 19px 9px; transform: translateX(-50%); }
.stats { right: 24px; display: grid; grid-template-columns: 1fr 1fr; width: 200px; text-align: center; }
.stat { display: flex; flex-direction: column; padding: 13px 0 10px; }
.stat + .stat { border-left: 1px solid var(--line); }
.stat dd { font-size: 42px; line-height: 60px; }
.stat dt { color: var(--gray); font-size: 18px; font-weight: 800; line-height: 27px; }
.infinity { font-size: 30px; line-height: 30px; }

.attribution { position: absolute; right: 0; bottom: 0; padding: 0 8px 0 31px; background: rgba(255, 255, 255, .8); color: #333; font-size: 18px; line-height: 25px; }
.attribution a { color: #0078a8; text-decoration: none; }
```
